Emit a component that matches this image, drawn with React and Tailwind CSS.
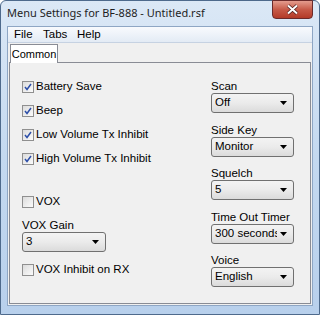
import React from 'react';

// Win7 style check box
const Check = ({ checked, label }) => (
  <div className="flex items-center h-[12px]">
    <span className="w-[12px] h-[12px] border border-[#8f8f8f] bg-gradient-to-br from-[#dcdcdc] to-[#fbfbfb] flex items-center justify-center">
      {checked && (
        <svg width="8" height="8" viewBox="0 0 8 8">
          <path d="M1 4 L3 6.5 L7 1" stroke="#2c4ea8" strokeWidth="1.5" fill="none" />
        </svg>
      )}
    </span>
    <span className="ml-[2px] leading-none">{label}</span>
  </div>
);

const Combo = ({ value, width = 'w-[84px]' }) => (
  <div className={`${width} h-[20px] rounded-[3px] border border-[#707070] bg-gradient-to-b from-[#f3f3f3] via-[#ebebeb] to-[#dbdbdb] flex items-center pl-[3px] pr-[6px]`}>
    <span className="flex-1 overflow-hidden whitespace-nowrap">{value}</span>
    <svg width="7" height="4" viewBox="0 0 7 4" className="ml-[3px] shrink-0">
      <path d="M0 0 H7 L3.5 4 Z" fill="#000" />
    </svg>
  </div>
);

const Field = ({ label, value }) => (
  <div>
    <div className="leading-[14px] h-[14px]">{label}</div>
    <Combo value={value} width="w-[83px]" />
  </div>
);

export default function App() {
  return (
    <div
      className="w-[320px] h-[315px] relative flex flex-col border border-[#4e6a8c] rounded-t-[6px] bg-gradient-to-b from-[#dbe8f6] via-[#c4d9f0] to-[#b8d0ec] text-[11.5px] text-black"
      style={{ fontFamily: '"Liberation Sans", Arial, sans-serif' }}
    >
      {/* title bar */}
      <div
        className="h-[25px] flex items-center pl-[6px] text-[11px] text-[#1e1e1e]"
        style={{ fontFamily: '"Noto Sans", "Open Sans", sans-serif' }}
      >
        Menu Settings for BF-888 - Untitled.rsf
      </div>
      <div className="absolute top-[-1px] right-[6px] w-[41px] h-[19px] rounded-b-[4px] border border-[#6b2a2a] bg-gradient-to-b from-[#e49c8e] via-[#c75a48] to-[#b33a28] flex items-center justify-center">
        <svg width="13" height="11" viewBox="0 0 13 11">
          <path d="M2 1.5 L11 9.5 M11 1.5 L2 9.5" stroke="#4a1a1a" strokeWidth="3.4" />
          <path d="M2 1.5 L11 9.5 M11 1.5 L2 9.5" stroke="#fff" strokeWidth="2" />
        </svg>
      </div>

      {/* client */}
      <div className="flex-1 mx-[6px] mb-[8px] border border-[#8ea6c4] bg-[#f0f0f0] flex flex-col">
        <div className="h-[16px] flex items-center pl-[6px] text-[11.5px] bg-gradient-to-b from-[#f8fafd] to-[#e3ebf5] border-b border-[#c6d2e2]">
          <span className="w-[29px]">File</span>
          <span className="w-[34px]">Tabs</span>
          <span>Help</span>
        </div>
        <div className="flex-1 flex flex-col px-[1px] pt-[1px] pb-[1px]">
          <div className="flex relative z-10 -mb-[1px]">
            <div className="ml-[1px] w-[48px] h-[19px] bg-white border border-b-0 border-[#898c95] flex items-center justify-center text-[11px]">
              Common
            </div>
          </div>
          <div className="flex-1 border border-[#898c95] bg-[#f0f0f0] flex pl-[12px]">
            {/* left column */}
            <div className="w-[189px] pt-[18px]">
              <div className="flex flex-col gap-[12px]">
                <Check checked label="Battery Save" />
                <Check checked label="Beep" />
                <Check checked label="Low Volume Tx Inhibit" />
                <Check checked label="High Volume Tx Inhibit" />
              </div>
              <div className="mt-[31px]">
                <Check label="VOX" />
              </div>
              <div className="mt-[10px]">
                <div className="leading-[14px] h-[14px]">VOX Gain</div>
                <Combo value="3" />
              </div>
              <div className="mt-[12px]">
                <Check label="VOX Inhibit on RX" />
              </div>
            </div>
            {/* right column */}
            <div className="pt-[16px] flex flex-col gap-[9.5px]">
              <Field label="Scan" value="Off" />
              <Field label="Side Key" value="Monitor" />
              <Field label="Squelch" value="5" />
              <Field label="Time Out Timer" value="300 seconds" />
              <Field label="Voice" value="English" />
            </div>
          </div>
        </div>
      </div>
    </div>
  );
}
